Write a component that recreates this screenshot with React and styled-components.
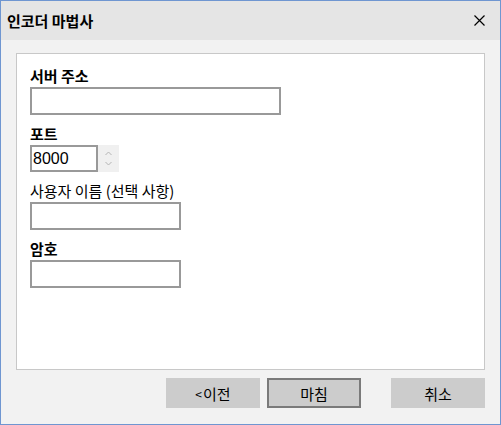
import * as React from 'react';
import styled, { createGlobalStyle } from 'styled-components';

const GlobalStyle = createGlobalStyle`
    html, body {
        margin: 0;
        padding: 0;
        background: #ffffff;
    }
    * {
        box-sizing: border-box;
    }
`;

const KR = `"Noto Sans CJK KR", "Liberation Sans", sans-serif`;

// Dialog frame
const Window = styled.div`
    width: 501px;
    height: 425px;
    border: 1px solid #6f96d1;
    background: #f2f2f2;
    display: flex;
    flex-direction: column;
    font-family: ${KR};
    color: #000;
`;

const TitleBar = styled.div`
    height: 39px;
    background: #e5e5e5;
    display: flex;
    align-items: center;
    justify-content: space-between;
    padding: 0 14px 0 6px;
`;

const Title = styled.span`
    font-size: 15px;
    font-weight: bold;
    line-height: 19px;
`;

const CloseButton = styled.div`
    width: 14px;
    height: 14px;
    display: flex;
    align-items: center;
    justify-content: center;
`;

const Body = styled.div`
    flex: 1;
    display: flex;
    flex-direction: column;
    padding: 13px 15px 0 15px;
`;

const Panel = styled.div`
    height: 317px;
    background: #ffffff;
    border: 1px solid #c8c8c8;
    padding: 12px 13px;
    display: flex;
    flex-direction: column;
    gap: 9px;
`;

// Form field
const Field = styled.div`
    display: flex;
    flex-direction: column;
    gap: 2px;
`;

const Label = styled.label`
    font-size: 15px;
    line-height: 19px;
    height: 19px;
    font-weight: ${props => (props.bold ? 'bold' : 'normal')};
`;

const TextBox = styled.input`
    width: ${props => props.w}px;
    height: ${props => props.h || 28}px;
    border: 2px solid #999999;
    background: #ffffff;
    padding: 0 1px;
    margin: 0;
    font-family: "Liberation Sans", Arial, sans-serif;
    font-size: 16px;
    color: #000;
    outline: none;
`;

const SpinRow = styled.div`
    display: flex;
`;

const Spinner = styled.div`
    width: 21px;
    height: 27px;
    background: #f0f0f0;
    display: flex;
    flex-direction: column;
    align-items: center;
    justify-content: space-around;
    padding: 3px 0;
`;

// Bottom buttons
const ButtonRow = styled.div`
    display: flex;
    justify-content: flex-end;
    margin-top: 8px;
`;

const Button = styled.div`
    width: 94px;
    height: 30px;
    margin-left: ${props => props.gap || 0}px;
    background: #cccccc;
    border: ${props => (props.primary ? '2px solid #7a7a7a' : 'none')};
    display: flex;
    align-items: center;
    justify-content: center;
    font-size: 15px;
    line-height: 19px;
`;

const Small = styled.span`
    font-size: 12px;
    margin-right: 1px;
`;

const Chevron = ({ up }) => (
    <svg width="7" height="5" viewBox="0 0 7 5">
        <path
            d={up ? 'M0.5 4 L3.5 1 L6.5 4' : 'M0.5 1 L3.5 4 L6.5 1'}
            fill="none"
            stroke="#b4b4b4"
            strokeWidth="1"
        />
    </svg>
);

export default function App() {
    const [server, setServer] = React.useState('');
    const [port, setPort] = React.useState('8000');
    const [user, setUser] = React.useState('');
    const [password, setPassword] = React.useState('');

    return (
        <>
            <GlobalStyle />
            <Window>
                <TitleBar>
                    <Title>인코더 마법사</Title>
                    <CloseButton>
                        <svg width="11" height="11" viewBox="0 0 11 11">
                            <path d="M0.5 0.5 L10.5 10.5 M10.5 0.5 L0.5 10.5" stroke="#000" strokeWidth="1.2" />
                        </svg>
                    </CloseButton>
                </TitleBar>

                <Body>
                    <Panel>
                        {/* Server address */}
                        <Field>
                            <Label bold htmlFor="server">서버 주소</Label>
                            <TextBox id="server" w={251} value={server} onChange={e => setServer(e.target.value)} />
                        </Field>

                        {/* Port */}
                        <Field>
                            <Label bold htmlFor="port">포트</Label>
                            <SpinRow>
                                <TextBox id="port" w={68} h={27} value={port} onChange={e => setPort(e.target.value)} />
                                <Spinner>
                                    <Chevron up />
                                    <Chevron />
                                </Spinner>
                            </SpinRow>
                        </Field>

                        {/* User name */}
                        <Field>
                            <Label htmlFor="user">사용자 이름 (선택 사항)</Label>
                            <TextBox id="user" w={151} value={user} onChange={e => setUser(e.target.value)} />
                        </Field>

                        {/* Password */}
                        <Field>
                            <Label bold htmlFor="password">암호</Label>
                            <TextBox id="password" type="password" w={151} value={password} onChange={e => setPassword(e.target.value)} />
                        </Field>
                    </Panel>

                    <ButtonRow>
                        <Button><Small>&lt;</Small>이전</Button>
                        <Button primary gap={7}>마침</Button>
                        <Button gap={30}>취소</Button>
                    </ButtonRow>
                </Body>
            </Window>
        </>
    );
}
